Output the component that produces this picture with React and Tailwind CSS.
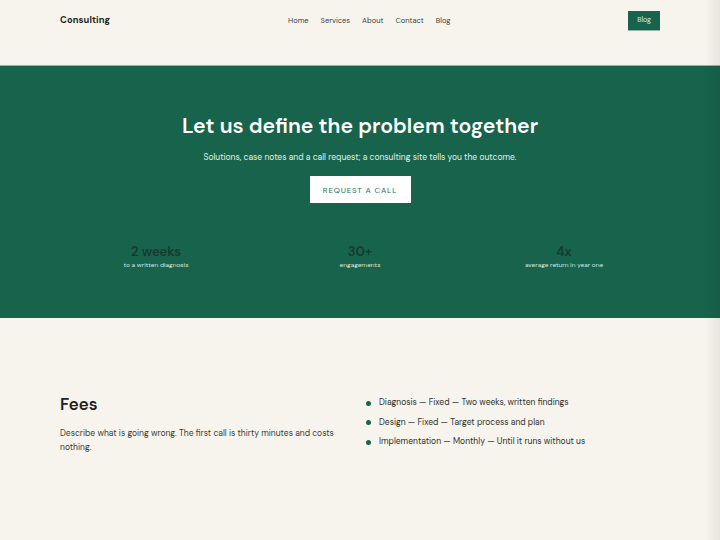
import React from 'react';

const NAV = ['Home', 'Services', 'About', 'Contact', 'Blog'];

const STATS = [
  { value: '2 weeks', label: 'to a written diagnosis' },
  { value: '30+', label: 'engagements' },
  { value: '4x', label: 'average return in year one' },
];

const FEES = [
  'Diagnosis — Fixed — Two weeks, written findings',
  'Design — Fixed — Target process and plan',
  'Implementation — Monthly — Until it runs without us',
];

export default function App() {
  return (
    <div className="min-h-[540px] bg-[#f7f4ed] text-[#1f2522] font-['DM_Sans','Inter',sans-serif]">
      <header className="mx-auto flex h-[41px] w-[600px] items-center justify-between">
        <span className="text-[9.3px] font-bold tracking-[0.01em] text-[#1d1f1e]">Consulting</span>
        <nav className="flex gap-[12px] text-[7.5px] text-[#3a3f3c]">
          {NAV.map((item) => (
            <a key={item} href="#">{item}</a>
          ))}
        </nav>
        <a
          href="#"
          className="flex h-[20px] items-center border-b border-[#8fb5a8] bg-[#17634b] px-[9px] text-[7px] text-[#dcebe4]"
        >
          Blog
        </a>
      </header>

      <section className="mt-[24px] border-t border-[#8fb5a8] bg-[#17634b] pb-[48px] pt-[47px]">
        <div className="mx-auto flex w-[600px] flex-col items-center">
          <h1 className="text-[21.3px] font-semibold leading-[26px] text-white">
            Let us define the problem together
          </h1>
          <p className="mt-[12px] text-[8.5px] leading-[14px] text-[#e3efe9]">
            Solutions, case notes and a call request; a consulting site tells you the outcome.
          </p>
          <a
            href="#"
            className="mt-[11px] flex h-[27px] w-[101px] items-center justify-center bg-white text-[8px] tracking-[0.1em] text-[#2f6b58]"
          >
            REQUEST A CALL
          </a>
          <div className="mt-[40px] grid w-full grid-cols-3 gap-3">
            {STATS.map((s) => (
              <div key={s.value} className="flex flex-col items-center">
                <span className="text-[13px] font-semibold leading-[18px] text-[#173a2f]">{s.value}</span>
                <span className="text-[6.5px] leading-[9px] text-[#d4e6de]">{s.label}</span>
              </div>
            ))}
          </div>
        </div>
      </section>

      <section className="pb-[80px] pt-[76px]">
        <div className="mx-auto grid w-[600px] grid-cols-2 items-start gap-[18px]">
          <div>
            <h2 className="text-[16.8px] font-semibold leading-[20px] text-[#1d211f]">Fees</h2>
            <p className="mt-[13px] w-[285px] text-[8.5px] leading-[14px] text-[#3a3e3c]">
              Describe what is going wrong. The first call is thirty minutes and costs nothing.
            </p>
          </div>
          <ul className="mt-[2px] flex flex-col gap-[5.5px]">
            {FEES.map((f) => (
              <li key={f} className="-ml-[3px] flex items-center gap-[8px] text-[8.5px] leading-[14px] text-[#2e3230]">
                <span className="h-[5px] w-[5px] rounded-full bg-[#17634b]" />
                {f}
              </li>
            ))}
          </ul>
        </div>
      </section>

      <div className="pointer-events-none fixed inset-y-0 right-0 w-[14px] bg-gradient-to-r from-transparent to-[#00000010]" />
    </div>
  );
}
